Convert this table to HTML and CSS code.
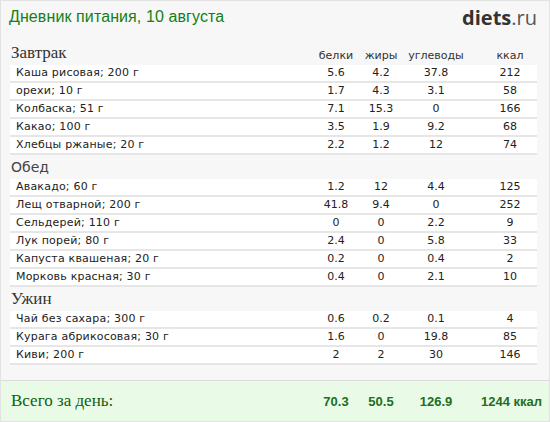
FILE: index.html
```html
<!DOCTYPE html>
<html lang="ru">
<head>
<meta charset="utf-8">
<title>Дневник питания</title>
<link rel="stylesheet" href="styles.css">
</head>
<body>
<div class="panel">
  <header class="top">
    <h1 class="title">Дневник питания, 10 августа</h1>
    <div class="logo"><b>diets</b>.ru</div>
  </header>

  <section class="meal">
    <div class="meal-head">
      <h2 class="meal-name serif">Завтрак</h2>
      <span class="col">белки</span><span class="col">жиры</span><span class="col">углеводы</span><span class="col kcal">ккал</span>
    </div>
    <div class="row"><span class="name">Каша рисовая; 200 г</span><span class="col">5.6</span><span class="col">4.2</span><span class="col">37.8</span><span class="col kcal">212</span></div>
    <div class="row"><span class="name">орехи; 10 г</span><span class="col">1.7</span><span class="col">4.3</span><span class="col">3.1</span><span class="col kcal">58</span></div>
    <div class="row"><span class="name">Колбаска; 51 г</span><span class="col">7.1</span><span class="col">15.3</span><span class="col">0</span><span class="col kcal">166</span></div>
    <div class="row"><span class="name">Какао; 100 г</span><span class="col">3.5</span><span class="col">1.9</span><span class="col">9.2</span><span class="col kcal">68</span></div>
    <div class="row"><span class="name">Хлебцы ржаные; 20 г</span><span class="col">2.2</span><span class="col">1.2</span><span class="col">12</span><span class="col kcal">74</span></div>
  </section>

  <section class="meal">
    <div class="meal-head">
      <h2 class="meal-name sans">Обед</h2>
    </div>
    <div class="row"><span class="name">Авакадо; 60 г</span><span class="col">1.2</span><span class="col">12</span><span class="col">4.4</span><span class="col kcal">125</span></div>
    <div class="row"><span class="name">Лещ отварной; 200 г</span><span class="col">41.8</span><span class="col">9.4</span><span class="col">0</span><span class="col kcal">252</span></div>
    <div class="row"><span class="name">Сельдерей; 110 г</span><span class="col">0</span><span class="col">0</span><span class="col">2.2</span><span class="col kcal">9</span></div>
    <div class="row"><span class="name">Лук порей; 80 г</span><span class="col">2.4</span><span class="col">0</span><span class="col">5.8</span><span class="col kcal">33</span></div>
    <div class="row"><span class="name">Капуста квашеная; 20 г</span><span class="col">0.2</span><span class="col">0</span><span class="col">0.4</span><span class="col kcal">2</span></div>
    <div class="row"><span class="name">Морковь красная; 30 г</span><span class="col">0.4</span><span class="col">0</span><span class="col">2.1</span><span class="col kcal">10</span></div>
  </section>

  <section class="meal">
    <div class="meal-head">
      <h2 class="meal-name serif">Ужин</h2>
    </div>
    <div class="row"><span class="name">Чай без сахара; 300 г</span><span class="col">0.6</span><span class="col">0.2</span><span class="col">0.1</span><span class="col kcal">4</span></div>
    <div class="row"><span class="name">Курага абрикосовая; 30 г</span><span class="col">1.6</span><span class="col">0</span><span class="col">19.8</span><span class="col kcal">85</span></div>
    <div class="row"><span class="name">Киви; 200 г</span><span class="col">2</span><span class="col">2</span><span class="col">30</span><span class="col kcal">146</span></div>
  </section>

  <footer class="total">
    <span class="total-label">Всего за день:</span>
    <span class="tv">70.3</span><span class="tv">50.5</span><span class="tv">126.9</span><span class="tv kcal">1244 ккал</span>
  </footer>
</div>
</body>
</html>
```
FILE: styles.css
```css
* { box-sizing: border-box; }
html, body { margin: 0; padding: 0; background: #fff; }
.panel {
  width: 550px;
  height: 422px;
  border: 1px solid #e2e2e2;
  background: #f7f7f7;
  display: flex;
  flex-direction: column;
  font-family: "DejaVu Sans", Verdana, sans-serif;
  color: #222;
}
.top {
  height: 38px;
  display: flex;
  justify-content: space-between;
  align-items: flex-start;
  padding: 0 12px 0 8px;
}
.title {
  margin: 6px 0 0;
  font-family: "Liberation Sans", Arial, sans-serif;
  font-weight: normal;
  font-size: 16px;
  line-height: 20px;
  color: #148014;
  letter-spacing: 0.1px;
}
.logo {
  margin-top: 5px;
  font-family: "Open Sans", "DejaVu Sans", sans-serif;
  font-size: 20px;
  line-height: 24px;
  color: #555;
}
.logo b { color: #333; font-weight: 700; }

.meal { padding: 0 12px 0 9px; }
.meal-head {
  height: 26px;
  display: grid;
  grid-template-columns: 1fr 46px 44px 66px 68px;
  align-items: end;
  padding-bottom: 3px;
  font-size: 11px;
  color: #333;
}
.meal:nth-of-type(n+2) .meal-head { height: 24px; }
.meal-name {
  margin: 0;
  padding-left: 1px;
  font-weight: normal;
  color: #333;
  line-height: 18px;
}
.meal-name.serif { font-family: "Liberation Serif", serif; font-size: 17px; }
.meal-name.sans { font-family: "DejaVu Sans", sans-serif; font-size: 14px; color: #444; }

.row {
  display: grid;
  grid-template-columns: 1fr 46px 44px 66px 68px;
  height: 18px;
  background: #fff;
  border-bottom: 2px solid #e6e6e6;
  font-size: 11px;
  line-height: 16px;
  color: #222;
}
.name { padding-left: 6px; letter-spacing: 0.2px; white-space: nowrap; }
.col { text-align: center; }
.col.kcal { padding-left: 14px; }

.total {
  margin-top: auto;
  height: 41px;
  border-top: 1px solid #dcdcdc;
  background: #e9fbe7;
  display: grid;
  grid-template-columns: 1fr 46px 44px 66px 68px;
  align-items: center;
  padding: 0 12px 0 10px;
}
.total-label {
  font-family: "Liberation Serif", serif;
  font-size: 17px;
  color: #0d5f0d;
}
.tv {
  text-align: center;
  white-space: nowrap;
  font-family: "Liberation Sans", Arial, sans-serif;
  font-weight: bold;
  font-size: 13px;
  color: #216e21;
}
.tv.kcal { padding-left: 12px; }
```
